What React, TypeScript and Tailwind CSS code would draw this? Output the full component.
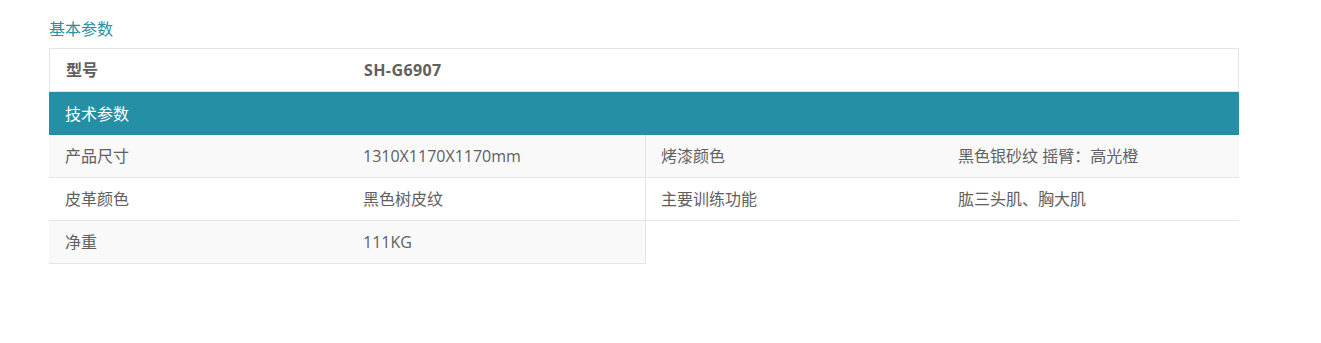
import React from 'react';

type Spec = { label: string; value: string };

const leftSpecs: Spec[] = [
    { label: '产品尺寸', value: '1310X1170X1170mm' },
    { label: '皮革颜色', value: '黑色树皮纹' },
    { label: '净重', value: '111KG' },
];

const rightSpecs: Spec[] = [
    { label: '烤漆颜色', value: '黑色银砂纹 摇臂：高光橙' },
    { label: '主要训练功能', value: '肱三头肌、胸大肌' },
];

const SpecRow: React.FC<{ spec: Spec; index: number; side: 'left' | 'right' }> = ({ spec, index, side }) => (
    <div
        className={`flex h-[43px] items-center border-b border-[#e5e5e5] ${index % 2 === 0 ? 'bg-[#f9f9f9]' : 'bg-white'} ${side === 'left' ? 'border-r' : ''}`}
    >
        <div className={side === 'left' ? 'w-[298px] pl-4' : 'w-[296px] pl-[15px]'}>{spec.label}</div>
        <div className="flex-1 pl-4">{spec.value}</div>
    </div>
);

export default function App() {
    return (
        <div
            className="min-h-[343px] bg-white pl-[49px] pt-[19px] text-[16px] text-[#606060]"
            style={{ fontFamily: '"Open Sans", "Noto Sans CJK SC", sans-serif' }}
        >
            <h2 className="mb-[9px] text-[16px] leading-[20px] font-normal text-[#2690a5]">基本参数</h2>

            <div className="w-[1190px]">
                {/* Model row */}
                <div className="flex h-[44px] items-center border border-[#e5e5e5] font-bold">
                    <div className="w-[298px] pl-4">型号</div>
                    <div className="pl-4 tracking-[0.4px]">SH-G6907</div>
                </div>

                {/* Section band */}
                <div className="flex h-[43px] items-center bg-[#258fa6] pl-4 text-white">技术参数</div>

                <div className="grid grid-cols-[597px_1fr]">
                    <div>
                        {leftSpecs.map((s, i) => (
                            <SpecRow key={s.label} spec={s} index={i} side="left" />
                        ))}
                    </div>
                    <div>
                        {rightSpecs.map((s, i) => (
                            <SpecRow key={s.label} spec={s} index={i} side="right" />
                        ))}
                    </div>
                </div>
            </div>
        </div>
    );
}
